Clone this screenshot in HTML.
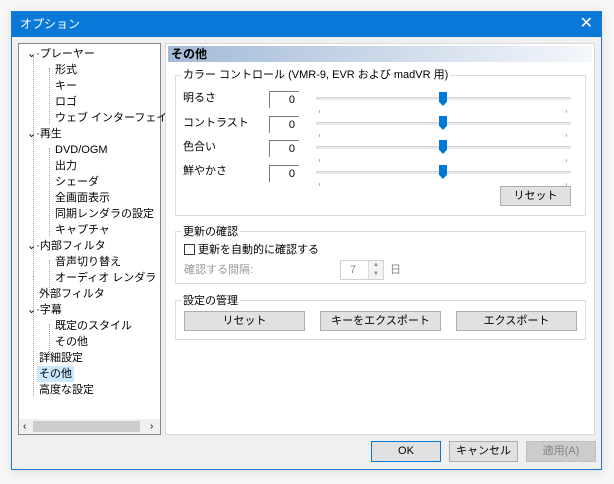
<!DOCTYPE html>
<html><head><meta charset="utf-8"><style>
*{box-sizing:border-box;margin:0;padding:0}
body{width:614px;height:484px;background:#f7f7f7;font-family:"Liberation Sans","Noto Sans CJK JP",sans-serif;font-size:11px;color:#000;position:relative;overflow:hidden}
.a{position:absolute}
#win{left:11px;top:11px;width:591px;height:459px;background:#f0f0f0;border:1px solid #1a78d6;box-shadow:0 2px 10px rgba(0,0,0,.12)}
#title{left:0;top:0;width:589px;height:25px;background:#0a78d7;color:#fff;font-size:12px;line-height:24px;padding-left:8px}
#tree{left:6px;top:31px;width:143px;height:392px;background:#fff;border:1px solid #828790}
.t{position:absolute;white-space:nowrap;line-height:16px;height:16px}
.dl{position:absolute;border-left:1px dotted #a0a0a0}
#panel{left:153px;top:31px;width:430px;height:392px;background:#fff;border:1px solid #d9d9d9}
.grp{position:absolute;border:1px solid #dcdcdc}
.gl{position:absolute;top:-8px;left:5px;background:#fff;padding:0 2px;line-height:14px}
.edit{position:absolute;width:30px;height:17px;border-top:1px solid #7a7a7a;border-left:1px solid #7a7a7a;text-align:right;padding-right:4px;line-height:16px}
.trk{position:absolute;height:3px;background:#e7e7e7;border-top:1px solid #d6d6d6}
.thumb{position:absolute;width:8px;height:14px;background:#0078d7;clip-path:polygon(0 0,100% 0,100% 70%,50% 100%,0 70%)}
.tick{position:absolute;width:1px;height:3px;background:#b0b0b0}
.btn{position:absolute;background:#e1e1e1;border:1px solid #adadad;text-align:center;font-size:11px}
</style></head><body>
<div id="win" class="a">
<div id="title" class="a">オプション<span class="a" style="right:8px;top:0;font-size:16px">✕</span></div>
<div id="tree" class="a">
 <div class="dl" style="left:14px;top:12px;height:220px"></div>
 <div class="dl" style="left:30px;top:24px;height:56px"></div>
 <div class="dl" style="left:30px;top:104px;height:88px"></div>
 <div class="dl" style="left:30px;top:216px;height:32px"></div>
 <div class="dl" style="left:30px;top:280px;height:32px"></div>
 <div class="dl" style="left:14px;top:232px;height:120px"></div>
 <div class="t" style="left:8px;top:2px">⌄·プレーヤー</div>
 <div class="t" style="left:36px;top:18px">形式</div>
 <div class="t" style="left:36px;top:34px">キー</div>
 <div class="t" style="left:36px;top:50px">ロゴ</div>
 <div class="t" style="left:36px;top:66px">ウェブ インターフェイス</div>
 <div class="t" style="left:8px;top:82px">⌄·再生</div>
 <div class="t" style="left:36px;top:98px">DVD/OGM</div>
 <div class="t" style="left:36px;top:114px">出力</div>
 <div class="t" style="left:36px;top:130px">シェーダ</div>
 <div class="t" style="left:36px;top:146px">全画面表示</div>
 <div class="t" style="left:36px;top:162px">同期レンダラの設定</div>
 <div class="t" style="left:36px;top:178px">キャプチャ</div>
 <div class="t" style="left:8px;top:194px">⌄·内部フィルタ</div>
 <div class="t" style="left:36px;top:210px">音声切り替え</div>
 <div class="t" style="left:36px;top:226px">オーディオ レンダラ</div>
 <div class="t" style="left:20px;top:242px">外部フィルタ</div>
 <div class="t" style="left:8px;top:258px">⌄·字幕</div>
 <div class="t" style="left:36px;top:274px">既定のスタイル</div>
 <div class="t" style="left:36px;top:290px">その他</div>
 <div class="t" style="left:20px;top:306px">詳細設定</div>
 <div class="t" style="left:18px;top:322px;background:#cce8ff;padding:0 2px">その他</div>
 <div class="t" style="left:20px;top:338px">高度な設定</div>
 <div class="a" style="left:0;top:375px;width:141px;height:15px;background:#f0f0f0"></div>
 <div class="a" style="left:14px;top:377px;width:107px;height:11px;background:#cdcdcd"></div>
 <div class="t" style="left:4px;top:375px;font-size:10px;line-height:15px">‹</div>
 <div class="t" style="left:131px;top:375px;font-size:10px;line-height:15px">›</div>
</div>
<div id="panel" class="a">
 <div class="a" style="left:2px;top:2px;width:424px;height:16px;background:linear-gradient(90deg,#a3bad8,#f4f7fb);font-weight:bold;font-size:12px;line-height:16px;padding-left:3px">その他</div>
 <div class="grp" style="left:9px;top:31px;width:411px;height:141px"><div class="gl">カラー コントロール (VMR-9, EVR および madVR 用)</div></div>
 <div class="t" style="left:17px;top:46px">明るさ</div>
 <div class="t" style="left:17px;top:71px">コントラスト</div>
 <div class="t" style="left:17px;top:95px">色合い</div>
 <div class="t" style="left:17px;top:119px">鮮やかさ</div>
 <div class="edit" style="left:103px;top:47px">0</div>
 <div class="edit" style="left:103px;top:72px">0</div>
 <div class="edit" style="left:103px;top:96px">0</div>
 <div class="edit" style="left:103px;top:121px">0</div>
 <div class="trk" style="left:150px;top:53px;width:255px"></div>
 <div class="trk" style="left:150px;top:78px;width:255px"></div>
 <div class="trk" style="left:150px;top:102px;width:255px"></div>
 <div class="trk" style="left:150px;top:127px;width:255px"></div>
 <div class="thumb" style="left:273px;top:48px"></div>
 <div class="thumb" style="left:273px;top:72px"></div>
 <div class="thumb" style="left:273px;top:96px"></div>
 <div class="thumb" style="left:273px;top:121px"></div>
 <div class="tick" style="left:153px;top:66px"></div><div class="tick" style="left:400px;top:66px"></div>
 <div class="tick" style="left:153px;top:90px"></div><div class="tick" style="left:400px;top:90px"></div>
 <div class="tick" style="left:153px;top:115px"></div><div class="tick" style="left:400px;top:115px"></div>
 <div class="tick" style="left:153px;top:139px"></div><div class="tick" style="left:400px;top:139px"></div>
 <div class="btn" style="left:334px;top:142px;width:71px;height:20px;line-height:18px">リセット</div>
 <div class="grp" style="left:9px;top:187px;width:411px;height:53px"><div class="gl" style="top:-7px">更新の確認</div></div>
 <div class="a" style="left:18px;top:200px;width:11px;height:11px;border:1px solid #333;background:#fff"></div>
 <div class="t" style="left:32px;top:198px">更新を自動的に確認する</div>
 <div class="t" style="left:18px;top:218px;color:#9a9a9a">確認する間隔:</div>
 <div class="a" style="left:174px;top:216px;width:44px;height:20px;border:1px solid #d0d0d0;background:#fff"></div>
 <div class="t" style="left:184px;top:218px;color:#888">7</div>
 <div class="a" style="left:202px;top:217px;width:15px;height:18px;background:#f3f3f3;border-left:1px solid #ddd;font-size:6px;color:#888;text-align:center;line-height:9px">▲<br>▼</div>
 <div class="t" style="left:224px;top:218px;color:#888">日</div>
 <div class="grp" style="left:9px;top:256px;width:411px;height:40px"><div class="gl" style="top:-7px">設定の管理</div></div>
 <div class="btn" style="left:18px;top:267px;width:121px;height:20px;line-height:18px">リセット</div>
 <div class="btn" style="left:154px;top:267px;width:121px;height:20px;line-height:18px">キーをエクスポート</div>
 <div class="btn" style="left:290px;top:267px;width:121px;height:20px;line-height:18px">エクスポート</div>
</div>
<div class="btn" style="left:359px;top:429px;width:70px;height:21px;line-height:19px;border:1px solid #0078d7">OK</div>
<div class="btn" style="left:437px;top:429px;width:69px;height:21px;line-height:19px">キャンセル</div>
<div class="btn" style="left:514px;top:429px;width:70px;height:21px;line-height:19px;background:#ccc;border-color:#bfbfbf;color:#838383">適用(A)</div>
</div>
</body></html>
